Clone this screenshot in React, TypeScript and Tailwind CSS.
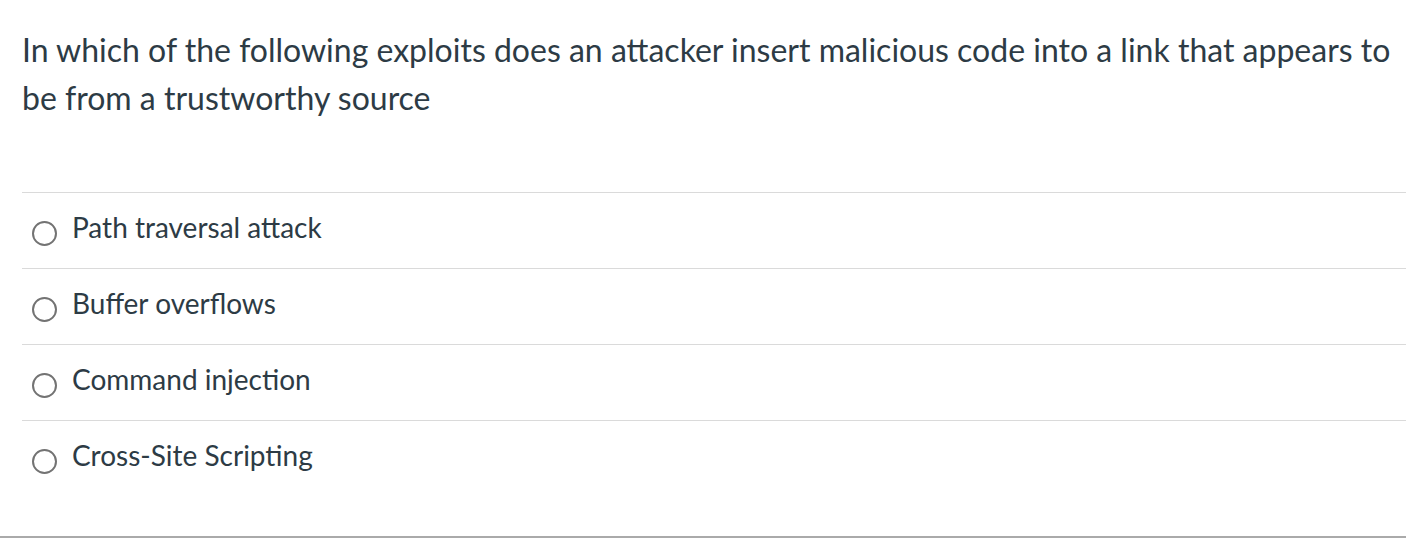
export default function App() {
  const answers = [
    "Path traversal attack",
    "Buffer overflows",
    "Command injection",
    "Cross-Site Scripting",
  ];
  return (
    <div
      className="w-[1406px] h-[538px] bg-white text-[#2d3b45] flex flex-col border-b-2 border-[#aaaaaa]"
      style={{ fontFamily: "Lato, 'Noto Sans', sans-serif" }}
    >
      <div className="pl-[22px] pt-[26px] h-[192px]">
        <p className="text-[32px] leading-[48px]">
          In which of the following exploits does an attacker insert malicious code into a link that appears to
          be from a trustworthy source
        </p>
      </div>
      <div className="pl-[22px]">
        {answers.map((a) => (
          <div key={a} className="h-[76px] border-t border-[#dadada] flex items-start pt-[16px]">
            <span className="ml-[10px] mt-[12px] w-[25px] h-[25px] rounded-full border-2 border-[#737373] shrink-0" />
            <span className="ml-[15px] text-[28px] leading-[36px]">{a}</span>
          </div>
        ))}
      </div>
    </div>
  );
}
